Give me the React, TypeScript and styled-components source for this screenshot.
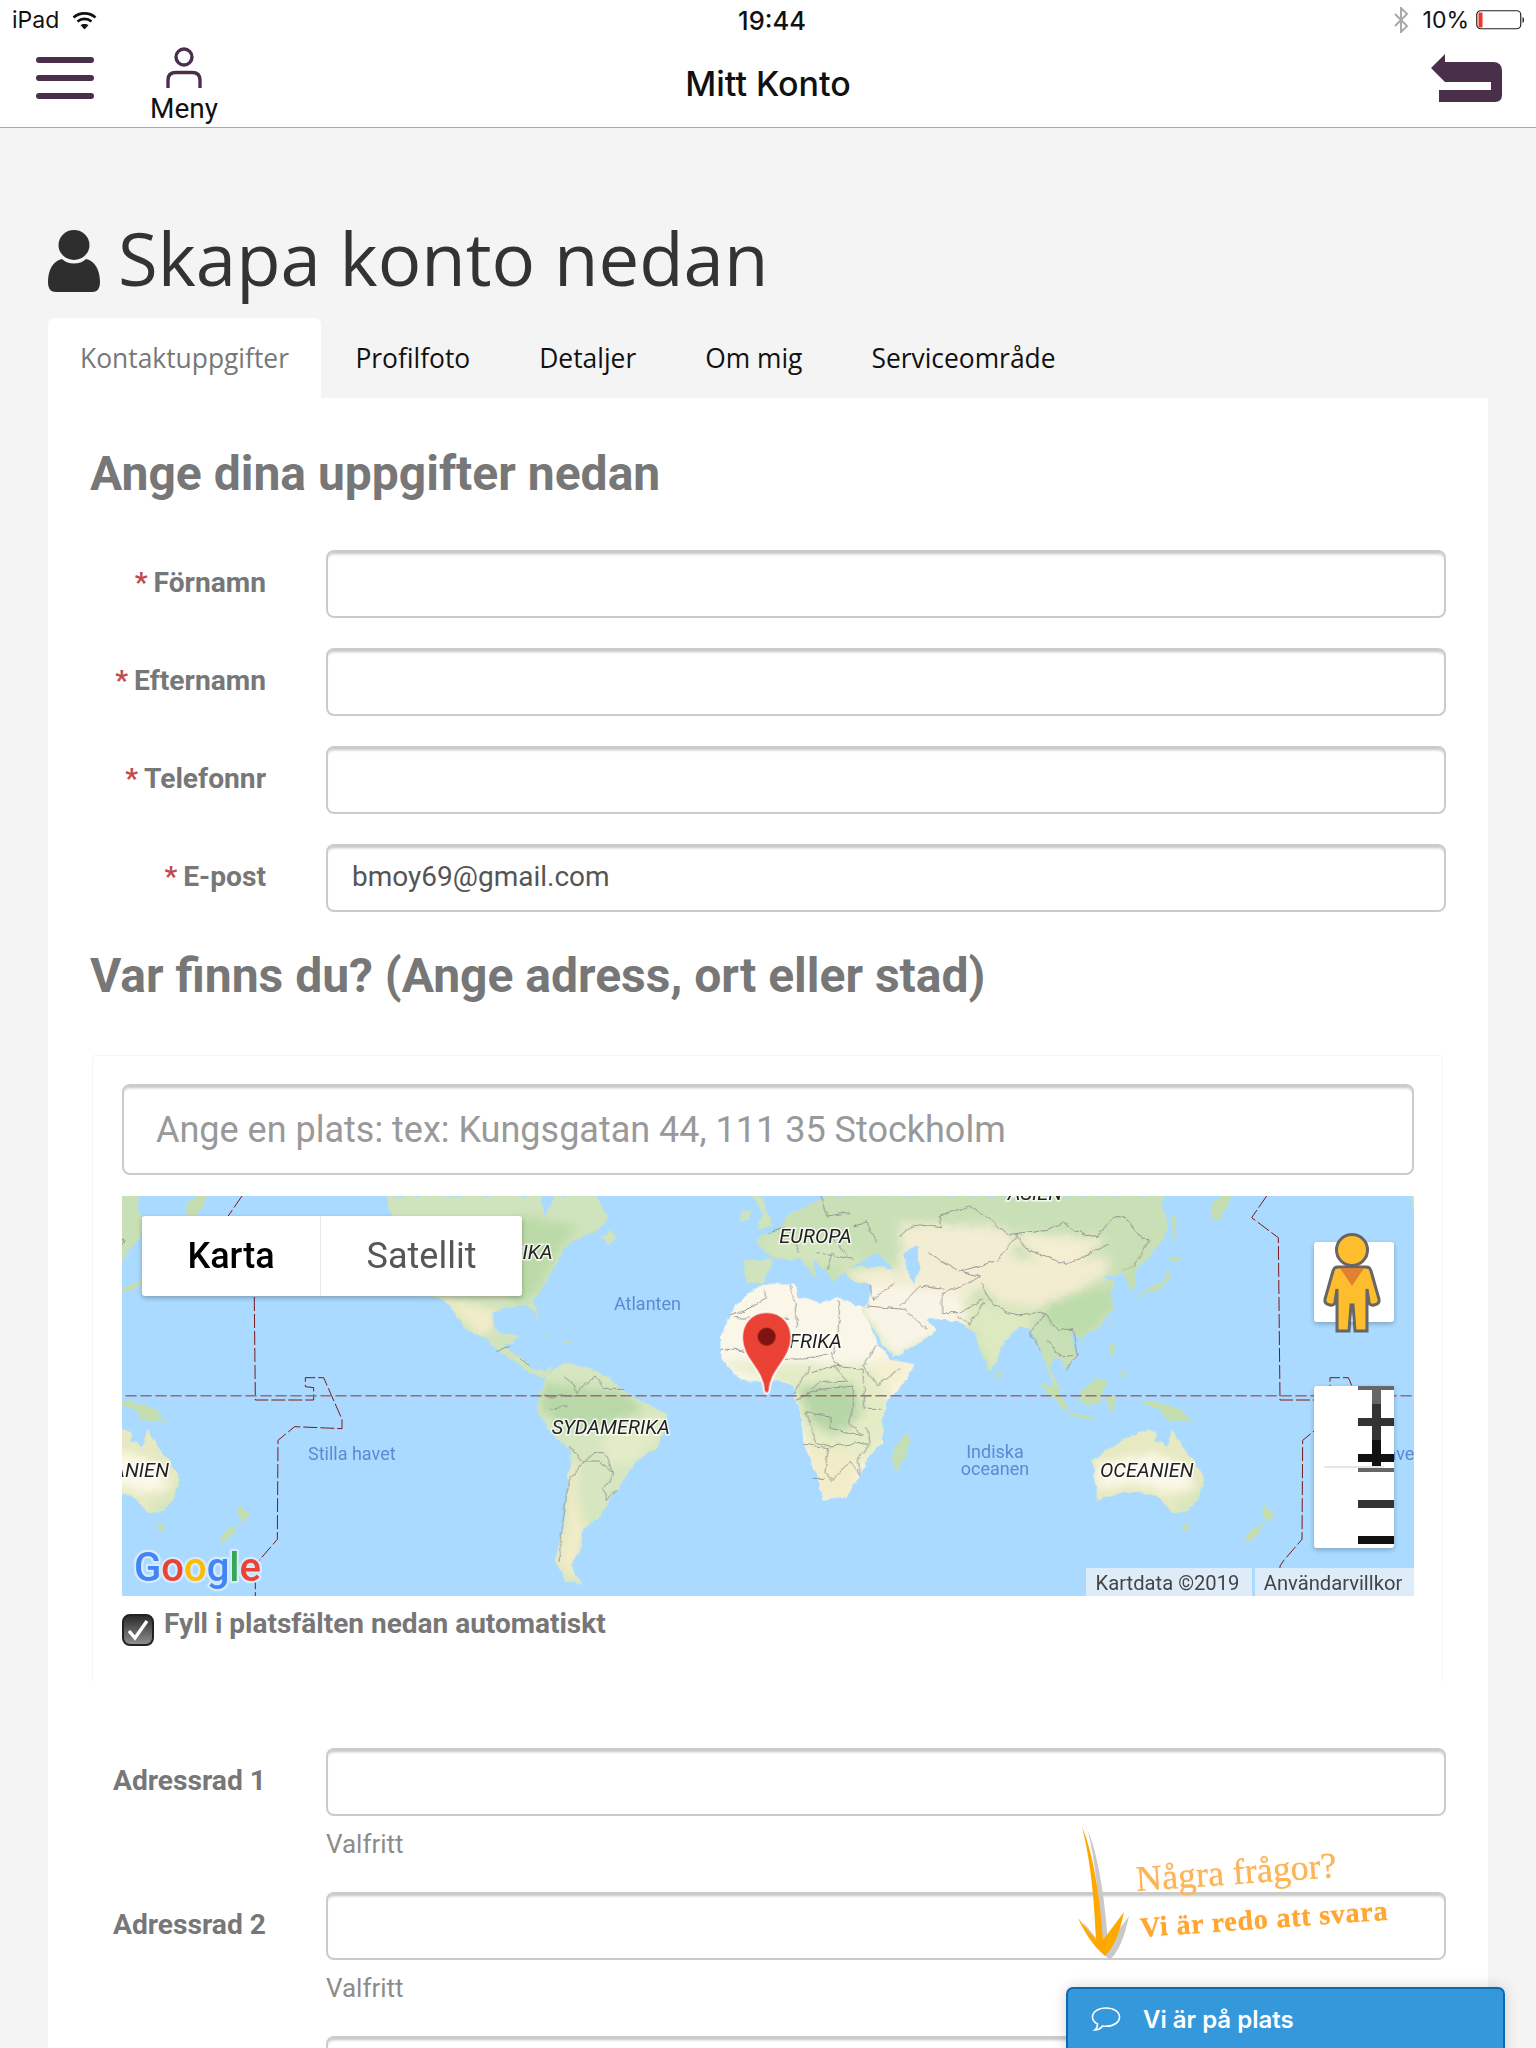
import { createGlobalStyle, styled } from "styled-components";

const GlobalStyle = createGlobalStyle`
	html, body {
		margin: 0;
		padding: 0;
		height: 2048px;
		overflow: hidden;
		background: #f4f4f4;
		font-family: Roboto, "Liberation Sans", sans-serif;
	}
	* { box-sizing: border-box; }
`;

const Page = styled.div`
	position: relative;
	width: 1536px;
	height: 2048px;
	overflow: hidden;
`;

const TopArea = styled.header`
	background: #fff;
	border-bottom: 1px solid #a9a9a9;
	height: 128px;
`;

const StatusBar = styled.div`
	display: grid;
	grid-template-columns: 1fr auto 1fr;
	align-items: center;
	height: 40px;
	padding: 0 10px 0 12px;
	font-family: Inter, sans-serif;
	font-size: 23px;
	color: #111;
`;

const StatusLeft = styled.div`
	display: flex;
	align-items: center;
	gap: 13px;
`;

const StatusRight = styled.div`
	display: flex;
	align-items: center;
	justify-content: flex-end;
	gap: 7px;
`;

const BluetoothIcon = styled.svg`
	margin-right: 7px;
`;

const Clock = styled.span`
	font-size: 25.5px;
	font-weight: 500;
	margin-left: 6px;
`;

const NavBar = styled.nav`
	display: grid;
	grid-template-columns: 1fr auto 1fr;
	align-items: center;
	height: 87px;
`;

const NavLeft = styled.div`
	align-self: start;
	display: flex;
	align-items: flex-start;
	gap: 56px;
	padding: 7px 0 0 36px;
`;

const Burger = styled.div`
	display: flex;
	flex-direction: column;
	gap: 12px;
	width: 58px;
	margin-top: 10px;

	span {
		display: block;
		height: 6px;
		border-radius: 3px;
		background: #4a2f4b;
	}
`;

const MenuButton = styled.div`
	display: flex;
	flex-direction: column;
	align-items: center;
	gap: 4px;
	font-size: 28px;
	line-height: 34px;
	color: #111;
`;

const NavTitle = styled.div`
	font-family: Inter, sans-serif;
	font-size: 34px;
	font-weight: 500;
	color: #111;
`;

const NavRight = styled.div`
	align-self: start;
	display: flex;
	justify-content: flex-end;
	padding: 14px 34px 0 0;
`;

const Main = styled.main`
	padding: 0 48px;
`;

const PageTitle = styled.h1`
	display: flex;
	align-items: center;
	gap: 18px;
	height: 190px;
	margin: 0;
	padding-top: 70px;
	font-family: "Open Sans", sans-serif;
	font-size: 72.5px;
	font-weight: 400;
	color: #333;

	svg {
		margin-top: 5px;
	}
`;

const Tabs = styled.div`
	display: flex;
	height: 80px;
`;

const Tab = styled.div<{ $active?: boolean }>`
	display: flex;
	align-items: center;
	padding: 0 ${(p) => (p.$active ? "32px" : "34.5px")};
	border-radius: 6px 6px 0 0;
	background: ${(p) => (p.$active ? "#fff" : "transparent")};
	color: ${(p) => (p.$active ? "#777" : "#111")};
	font-family: "Open Sans", sans-serif;
	font-size: 26.4px;
`;

const Panel = styled.section`
	background: #fff;
	padding: 46px 42px 0;
`;

const SectionTitle = styled.h2<{ $top?: number; $bottom?: number }>`
	height: 60px;
	margin: ${(p) => p.$top ?? 0}px 0 ${(p) => p.$bottom ?? 46}px;
	font-size: 48px;
	line-height: 60px;
	font-weight: 700;
	color: #777;
`;

const Rows = styled.div<{ $gap: number }>`
	display: flex;
	flex-direction: column;
	gap: ${(p) => p.$gap}px;
`;

const Row = styled.div`
	display: flex;
	gap: 60px;
`;

const Label = styled.label`
	width: 176px;
	height: 68px;
	flex: none;
	display: flex;
	align-items: center;
	justify-content: flex-end;
	gap: 6px;
	padding-bottom: 3px;
	font-size: 28.2px;
	font-weight: 700;
	color: #777;
	white-space: nowrap;
`;

const Required = styled.span`
	color: #c14b4b;
`;

const FieldColumn = styled.div`
	flex: 1;
	display: flex;
	flex-direction: column;
`;

const TextInput = styled.input<{ $large?: boolean }>`
	display: block;
	width: 100%;
	height: ${(p) => (p.$large ? "91px" : "68px")};
	padding: 0 ${(p) => (p.$large ? "32px" : "24px")} ${(p) => (p.$large ? "0" : "4px")};
	border: 2px solid #cbcbcb;
	border-radius: 8px;
	background: #fff;
	box-shadow: inset 0 4px 3px -2px rgba(0, 0, 0, 0.24);
	outline: none;
	font-family: Roboto, sans-serif;
	font-size: ${(p) => (p.$large ? "36px" : "28px")};
	font-weight: 400;
	color: #555;

	&::placeholder {
		color: #999;
		opacity: 1;
	}
`;

const HelpText = styled.div`
	height: 76px;
	padding-top: 10px;
	font-size: 26px;
	line-height: 36px;
	color: #8c8c8c;
`;

const LocationBox = styled.div`
	margin: 0 3px 65px 2px;
	padding: 28px 28px 36px 29px;
	border: 1px solid #f5f5f5;
	border-bottom-color: transparent;
	border-radius: 4px;
`;

const MapFrame = styled.div`
	position: relative;
	height: 400px;
	margin-top: 21px;
	overflow: hidden;
	background: #aadaff;

	> svg {
		display: block;
	}
`;

const MapToggle = styled.div`
	position: absolute;
	left: 20px;
	top: 20px;
	display: flex;
	width: 380px;
	height: 80px;
	border-radius: 3px;
	background: #fff;
	box-shadow: 0 2px 5px rgba(0, 0, 0, 0.28);
`;

const ToggleItem = styled.div<{ $active?: boolean }>`
	display: flex;
	align-items: center;
	justify-content: center;
	flex: ${(p) => (p.$active ? "0 0 179px" : "1")};
	font-size: 36px;
	font-weight: ${(p) => (p.$active ? 500 : 400)};
	color: ${(p) => (p.$active ? "#000" : "#565656")};
	border-right: ${(p) => (p.$active ? "1px solid #e6e6e6" : "none")};
`;

const MapControl = styled.div<{ $top: number; $height: number }>`
	position: absolute;
	left: 1192px;
	top: ${(p) => p.$top}px;
	width: 80px;
	height: ${(p) => p.$height}px;
	border-radius: 3px;
	background: #fff;
	box-shadow: 0 2px 5px rgba(0, 0, 0, 0.25);
`;

const Pegman = styled.svg`
	position: absolute;
	left: 10px;
	top: -9px;
	overflow: visible;
`;

const ZoomGlyph = styled.svg`
	position: absolute;
	left: 0;
	top: 0;
`;

const Attribution = styled.div`
	position: absolute;
	right: 0;
	bottom: 0;
	display: flex;
	gap: 3px;
`;

const AttributionItem = styled.span<{ $width: number }>`
	display: flex;
	align-items: center;
	justify-content: center;
	width: ${(p) => p.$width}px;
	height: 28px;
	padding: 1px 3px 0 0;
	background: #deecfa;
	font-size: 20.2px;
	color: #444;
`;

const PlaceName = styled.text`
	font-family: Roboto, sans-serif;
	font-size: 60px;
	font-style: italic;
	fill: #222;
	stroke: rgba(255, 255, 255, 0.75);
	stroke-width: 9px;
	paint-order: stroke;
`;

const OceanName = styled.text`
	font-family: Roboto, sans-serif;
	font-size: 54px;
	fill: #5a8bd2;
`;

const GoogleMark = styled.text`
	font-family: Roboto, sans-serif;
	font-size: 120px;
	font-weight: 500;
	stroke: #d5eaff;
	stroke-width: 14px;
	paint-order: stroke;
	stroke-linejoin: round;
`;

const CheckRow = styled.div`
	display: flex;
	gap: 10px;
	margin-top: 18px;
`;

const CheckBox = styled.div`
	display: flex;
	align-items: center;
	justify-content: center;
	width: 32px;
	height: 32px;
	border: 2px solid #222;
	border-radius: 8px;
	background: linear-gradient(#2c2c2c, #8e8e8e);
`;

const CheckLabel = styled.span`
	height: 22px;
	font-size: 28px;
	line-height: 20px;
	font-weight: 700;
	color: #777;
`;

const Hint = styled.div`
	position: absolute;
	left: 1076px;
	top: 1824px;
	width: 330px;
	height: 140px;
	pointer-events: none;
	font-family: "Liberation Serif", serif;
`;

const HintArrow = styled.svg`
	position: absolute;
	left: 0;
	top: 0;
`;

const HintLine = styled.div<{ $left: number; $top: number; $size: number; $bold?: boolean }>`
	position: absolute;
	left: ${(p) => p.$left}px;
	top: ${(p) => p.$top}px;
	font-size: ${(p) => p.$size}px;
	font-weight: ${(p) => (p.$bold ? 700 : 400)};
	letter-spacing: ${(p) => (p.$bold ? "0.8px" : "0")};
	color: ${(p) => (p.$bold ? "#ffa733" : "#fdb55a")};
	text-shadow: 0 0 1px ${(p) => (p.$bold ? "#ffa733" : "#fdb55a")};
	white-space: nowrap;
	transform: rotate(-4deg);
	transform-origin: left center;
`;

const ChatTab = styled.div`
	position: absolute;
	left: 1066px;
	top: 1987px;
	display: flex;
	align-items: center;
	gap: 22px;
	width: 439px;
	height: 70px;
	padding: 0 0 8px 23px;
	border-top: 2px solid #0b68b1;
	border-left: 2px solid #0b68b1;
	border-right: 2px solid #0b68b1;
	border-radius: 7px 7px 0 0;
	background: #3498db;
	box-shadow: 0 0 14px rgba(0, 0, 0, 0.16);
	font-family: Inter, sans-serif;
	font-size: 24px;
	font-weight: 600;
	color: #fff;
`;

const NORTH_AMERICA =
	"M-340,0 L120,0 L130,50 L125,75 L150,30 L160,0 L285,0 L325,65 L300,100 L260,115 L215,135 L185,170 L165,215 L130,270 L100,320 L120,375 L100,345 L75,325 L20,335 L-20,350 L-20,400 L20,415 L55,415 L45,440 L10,445 L40,470 L70,490 L100,520 L130,525 L160,505 L150,540 L120,545 L90,530 L60,510 L0,470 L-54,420 L-104,400 L-134,350 L-174,310 L-194,300 L-240,300 L-300,200 Z";
const SOUTH_AMERICA =
	"M190,500 L270,515 L330,545 L375,590 L440,625 L505,650 L490,720 L470,750 L400,810 L350,880 L330,915 L300,960 L250,1000 L240,1060 L210,1110 L245,1165 L200,1160 L165,1090 L190,1000 L205,850 L215,760 L160,720 L110,640 L120,590 L140,540 Z";
const AFRICA =
	"M660,420 L690,360 L730,300 L790,265 L880,262 L900,300 L960,320 L1010,305 L1090,335 L1130,440 L1170,490 L1240,505 L1220,550 L1160,620 L1145,680 L1150,740 L1100,790 L1080,840 L1040,900 L970,915 L950,840 L910,740 L905,660 L885,600 L880,565 L830,550 L770,555 L720,550 L665,490 Z";
const EURASIA =
	"M765,130 L840,95 L860,60 L900,40 L985,0 L1990,0 L1990,45 L2005,75 L1990,130 L1940,190 L1900,225 L1835,240 L1815,240 L1845,260 L1830,290 L1840,340 L1800,390 L1740,425 L1710,410 L1735,480 L1700,520 L1680,490 L1660,490 L1650,520 L1690,590 L1660,570 L1640,510 L1620,460 L1590,400 L1560,390 L1510,440 L1490,490 L1470,525 L1440,470 L1425,410 L1380,380 L1330,370 L1280,370 L1310,405 L1240,450 L1180,485 L1130,420 L1085,340 L1105,320 L1115,270 L1050,250 L1035,225 L1000,260 L980,225 L940,190 L950,250 L900,190 L830,190 L795,170 L770,130 Z";
const AUSTRALIA =
	"M575,795 L640,750 L680,725 L740,700 L770,710 L765,735 L805,750 L815,700 L850,760 L880,790 L912,850 L895,910 L850,955 L815,950 L770,900 L700,885 L620,905 L590,915 L590,870 Z";

const GREEN_ISLANDS = [
	"M420,560 L460,570 L510,640 L490,640 L440,590 Z",
	"M505,650 L580,665 L575,672 L510,660 Z",
	"M540,585 L590,550 L620,555 L600,620 L560,630 L540,610 Z",
	"M620,600 L650,595 L640,640 L625,645 Z",
	"M730,610 L790,620 L840,640 L885,688 L850,670 L800,675 L780,640 L730,625 Z",
	"M630,445 L645,445 L640,480 L628,470 Z",
	"M660,520 L680,525 L670,550 Z",
	"M632,385 L640,385 L636,405 Z",
	"M532,430 L550,428 L545,440 Z",
	"M288,518 L302,540 L288,548 Z",
	"M800,225 L815,225 L805,260 L770,285 L735,290 L720,315 L715,300 L750,275 L790,255 Z",
	"M810,180 L845,182 L815,200 Z",
	"M670,225 L700,210 L708,260 L690,285 L680,250 Z",
	"M815,55 L830,60 L825,145 L818,120 Z",
	"M935,20 L960,0 L995,0 L985,30 L945,85 L935,60 Z",
	"M1085,925 L1122,955 L1100,985 L1090,960 Z",
	"M1090,985 L1060,1030 L1030,1045 L1050,1005 Z",
	"M845,985 L870,985 L860,1010 Z",
];

const AFRICA_BORDERS =
	"M790,280 L800,305 L730,345 M870,265 L885,325 L890,395 M1018,315 V410 M700,365 L870,370 M665,460 L720,460 L780,490 L860,490 L925,488 L995,470 M1018,410 L995,480 L1020,520 M930,510 L900,560 L880,595 M935,530 L1000,510 L1040,555 L960,560 L935,580 M1000,510 L1090,520 L1090,560 M1130,445 L1090,510 L1130,570 L1200,520 M1090,570 V640 L1140,640 M890,610 L960,580 L1060,570 L1060,640 L1045,680 L1090,720 L1050,710 L990,700 L990,660 L915,650 M915,650 L950,740 L990,750 M910,745 L985,755 L975,830 L1000,855 M990,750 L1050,745 L1105,740 M1100,690 L1110,740 L1075,790 L1080,835 M940,850 H975 M1000,850 L1050,795 L1080,840 M690,360 L760,330";
const SOUTH_AMERICA_BORDERS =
	"M130,600 L230,600 M190,540 L225,570 L230,590 L285,540 L310,580 H370 M205,630 L150,640 M210,750 L250,800 L205,860 L185,1000 L180,1100 M250,800 L280,770 L310,770 L340,830 L310,880 L320,915 L350,880 M250,795 L300,795 L340,830 M-10,470 L30,450 M60,490 L90,510";
const EURASIA_BORDERS =
	"M810,110 L850,90 M870,110 L900,170 M950,170 L1060,190 M1060,90 L1100,80 L1130,140 M960,0 L980,60 L1050,50 M1000,130 L1040,180 M985,220 L1000,170 M1110,270 L1120,310 L1180,260 M1100,330 L1215,340 L1280,400 M1200,120 L1240,85 L1325,95 L1320,60 L1410,30 L1530,115 L1640,100 L1690,80 L1730,105 L1790,125 L1840,60 L1880,65 L1925,130 L1950,130 L1900,210 L1870,225 M1550,115 L1580,160 L1700,205 L1760,175 L1825,145 M1285,170 L1380,225 L1490,195 L1550,115 M1380,225 L1440,240 L1410,260 L1325,290 L1325,350 M1440,260 L1480,330 L1550,360 L1635,350 L1670,400 L1720,400 L1735,480 L1700,520 M1635,350 L1590,410 L1620,460 M1640,430 L1680,480 L1720,475 M1200,330 L1260,270 L1330,280 M1325,350 L1380,350 L1450,310 M1375,360 L1410,385 L1450,320";
const DATE_LINE =
	"M1100,0 L1055,65 L1135,125 L1140,612 L1315,612 L1315,575 L1290,572 L1290,545 L1345,545 L1400,670 L1400,698 L1258,692 L1208,733 L1206,1030 L1150,1095 L1140,1110 L1140,1200";

const WorldMap = () => (
	<svg width={1292} height={400} viewBox="0 0 3876 1200">
		<defs>
			<filter id="soft" x="-10%" y="-10%" width="120%" height="120%">
				<feGaussianBlur stdDeviation="14" />
			</filter>
			<filter id="rough" filterUnits="userSpaceOnUse" x={-420} y={-40} width={3000} height={1280} colorInterpolationFilters="sRGB">
				<feTurbulence type="fractalNoise" baseFrequency="0.035" numOctaves={3} seed={4} result="noise" />
				<feDisplacementMap in="SourceGraphic" in2="noise" scale={16} xChannelSelector="R" yChannelSelector="G" />
			</filter>
			<clipPath id="clipEurasia"><path d={EURASIA} /></clipPath>
			<clipPath id="clipAfrica"><path d={AFRICA} /></clipPath>
			<clipPath id="clipSouth"><path d={SOUTH_AMERICA} /></clipPath>
			<clipPath id="clipNorth"><path d={NORTH_AMERICA} /></clipPath>
			<clipPath id="clipAustralia"><path d={AUSTRALIA} /></clipPath>
			<g id="land" filter="url(#rough)">
				<path d={NORTH_AMERICA} fill="#cfe3bc" />
				<g clipPath="url(#clipNorth)">
					<g filter="url(#soft)">
						<path d="M-194,300 L-60,330 L0,345 L-20,400 L-60,420 L-134,350 Z" fill="#f1ecc8" />
						<path d="M60,60 L230,90 L170,170 L110,290 L60,320 L0,250 Z" fill="#bcdaa8" />
					</g>
				</g>
				<path d={SOUTH_AMERICA} fill="#d5e6c0" />
				<g clipPath="url(#clipSouth)">
					<g filter="url(#soft)">
						<path d="M130,560 L370,590 L430,640 L330,680 L200,700 L120,640 Z" fill="#b9d8a8" />
						<path d="M380,680 L490,650 L480,730 L400,810 L320,810 L300,720 Z" fill="#e2ecc6" />
						<path d="M215,800 L240,800 L230,900 L260,990 L230,1165 L170,1100 L195,1000 Z" fill="#f1ecc7" />
					</g>
				</g>
				<path d={AFRICA} fill="#faf7e9" />
				<g clipPath="url(#clipAfrica)">
					<g filter="url(#soft)">
						<path d="M650,500 L1090,505 L1160,530 L1180,700 L1100,800 L920,750 L860,570 Z" fill="#e4ecc6" />
						<path d="M890,570 L1060,560 L1090,650 L1010,720 L930,680 Z" fill="#b7d6a7" />
						<path d="M1130,480 L1250,500 L1180,590 L1130,560 Z" fill="#f5efd2" />
						<path d="M910,745 L1080,770 L1060,910 L960,920 Z" fill="#f2ecc8" />
					</g>
				</g>
				<path d={EURASIA} fill="#c9e0b6" />
				<g clipPath="url(#clipEurasia)">
					<g filter="url(#soft)">
						<path d="M1035,225 L1190,210 L1200,270 L1110,270 L1050,250 Z" fill="#f4eed3" />
						<path d="M1085,270 L1400,270 L1440,370 L1300,420 L1180,490 L1085,350 Z" fill="#f9f5e6" />
						<path d="M1200,80 L1500,90 L1560,130 L1480,260 L1400,300 L1200,270 Z" fill="#f2edd3" />
						<path d="M1570,110 L1820,130 L1760,180 L1700,210 L1620,200 L1550,130 Z" fill="#f4eed2" />
						<path d="M1440,240 L1530,180 L1680,200 L1830,180 L1820,240 L1700,300 L1620,340 L1500,320 L1440,270 Z" fill="#f2ecd0" />
						<path d="M1380,300 L1600,350 L1590,420 L1480,530 L1420,420 Z" fill="#dde9c0" />
						<path d="M1640,320 L1850,270 L1840,340 L1740,420 L1640,380 Z" fill="#bcdcaa" />
						<path d="M765,130 L1000,130 L1100,200 L960,210 L830,190 Z" fill="#d2e5bd" />
					</g>
				</g>
				<path d="M1060,210 L1130,170 L1180,215 L1050,212 Z" fill="#aadaff" />
				<path d="M1210,170 L1250,150 L1260,220 L1240,265 L1225,230 Z" fill="#aadaff" />
				<path d="M755,0 L785,0 L815,90 L770,100 L790,50 Z M720,75 L725,45 L755,40 L745,75 Z M305,125 L330,100 L350,125 L325,145 Z M730,190 L820,190 L790,260 L740,260 Z" fill="#cfe3bc" />
				<path d="M100,400 L160,420 L130,412 Z M185,430 L220,440 L190,440 Z M1225,710 L1230,740 L1195,825 L1178,810 L1180,755 Z" fill="#c6dfb2" />
				<path d={AFRICA_BORDERS} fill="none" stroke="#8c8c8c" strokeWidth={2.6} />
				<path d={SOUTH_AMERICA_BORDERS} fill="none" stroke="#8c8c8c" strokeWidth={2.6} />
				<path d={EURASIA_BORDERS} fill="none" stroke="#8c8c8c" strokeWidth={2.6} />
				<g transform="translate(1200 0)">
					{GREEN_ISLANDS.map((d) => (
						<path key={d} d={d} fill="#c4deb0" />
					))}
					<path d={AUSTRALIA} fill="#e6e9c2" />
					<g clipPath="url(#clipAustralia)">
						<g filter="url(#soft)">
							<path d="M590,800 L760,770 L860,810 L880,880 L800,890 L700,860 L590,880 Z" fill="#fbf8e8" />
							<path d="M800,950 L880,900 L912,850 L930,960 Z" fill="#d4e6bd" />
						</g>
					</g>
				</g>
			</g>
			<g id="world">
				<use href="#land" />
				<g transform="translate(1200 0)">
					<OceanName x={1298} y={792}>Stilla havet</OceanName>
					<OceanName x={285} y={785} textAnchor="middle">Indiska</OceanName>
					<OceanName x={285} y={838} textAnchor="middle">oceanen</OceanName>
					<PlaceName x={600} y={842}>OCEANIEN</PlaceName>
					<PlaceName x={405} y={13} textAnchor="middle">ASIEN</PlaceName>
					<path d={DATE_LINE} fill="none" stroke="#7c1818" strokeWidth={3} strokeDasharray="42 9" />
				</g>
				<OceanName x={342} y={342}>Atlanten</OceanName>
				<PlaceName x={838} y={140}>EUROPA</PlaceName>
				<PlaceName x={1026} y={455} textAnchor="end">AFRIKA</PlaceName>
				<PlaceName x={155} y={715}>SYDAMERIKA</PlaceName>
				<PlaceName x={158} y={190} textAnchor="end">NORDAMERIKA</PlaceName>
			</g>
		</defs>
		<use href="#world" x={1134 - 3074} />
		<use href="#world" x={1134} />
		<use href="#world" x={1134 + 3074} />
		<line x1={10} x2={3876} y1={600} y2={600} stroke="#9c6b76" strokeWidth={4} strokeDasharray="34 11" />
		<g transform="translate(1134 0)">
			<path
				d="M800,348 C748,348 726,390 726,425 C726,490 790,520 792,585 Q800,600 808,585 C810,520 874,490 874,425 C874,390 852,348 800,348 Z"
				fill="#ea4335"
				stroke="#fff"
				strokeWidth={5}
			/>
			<circle cx={800} cy={422} r={27} fill="#7e1310" />
		</g>
		<GoogleMark x={36} y={1154}>
			<tspan fill="#4285f4">G</tspan>
			<tspan fill="#ea4335">o</tspan>
			<tspan fill="#fbbc05">o</tspan>
			<tspan fill="#4285f4">g</tspan>
			<tspan fill="#34a853">l</tspan>
			<tspan fill="#ea4335">e</tspan>
		</GoogleMark>
	</svg>
);

const FormRow = ({ label, required, value }: { label: string; required?: boolean; value?: string }) => (
	<Row>
		<Label>
			{required && <Required>*</Required>}
			{label}
		</Label>
		<FieldColumn>
			<TextInput defaultValue={value} readOnly />
		</FieldColumn>
	</Row>
);

const OptionalRow = ({ label }: { label: string }) => (
	<Row>
		<Label>{label}</Label>
		<FieldColumn>
			<TextInput readOnly />
			<HelpText>Valfritt</HelpText>
		</FieldColumn>
	</Row>
);

const App = () => (
	<Page>
		<GlobalStyle />
		<TopArea>
			<StatusBar>
				<StatusLeft>
					<span>iPad</span>
					<svg width={25} height={19} viewBox="0 0 25 19" fill="none" stroke="#111" strokeWidth={2.6}>
						<path d="M1.5 6.5 C7.5 1 17.5 1 23.5 6.5" />
						<path d="M5.5 10.5 C9.5 7 15.5 7 19.5 10.5" />
						<path d="M12.5 18.5 L8.5 14 C10.5 12.5 14.5 12.5 16.5 14 Z" fill="#111" stroke="none" />
					</svg>
				</StatusLeft>
				<Clock>19:44</Clock>
				<StatusRight>
					<BluetoothIcon width={16} height={26} viewBox="0 0 16 26" fill="none" stroke="#a9a9a9" strokeWidth={2}>
						<path d="M2 7 L14 19 L8 25 V1 L14 7 L2 19" />
					</BluetoothIcon>
					<span>10%</span>
					<svg width={50} height={20} viewBox="0 0 50 20">
						<rect x={0.75} y={0.75} width={44} height={18} rx={4} fill="none" stroke="#222" strokeWidth={1.2} />
						<rect x={2.5} y={2.5} width={4} height={15} rx={1} fill="#f0352b" />
						<path d="M46.5 7 C48.5 7.5 48.5 12.5 46.5 13 Z" fill="#222" />
					</svg>
				</StatusRight>
			</StatusBar>
			<NavBar>
				<NavLeft>
					<Burger>
						<span />
						<span />
						<span />
					</Burger>
					<MenuButton>
						<svg width={36} height={41} viewBox="0 0 36 41" fill="none" stroke="#4a2f4b" strokeWidth={3.4}>
							<circle cx={18} cy={10} r={8} />
							<path d="M2 40 V33 C2 27 6 25.5 10 25.5 H26 C30 25.5 34 27 34 33 V40" strokeLinecap="round" />
						</svg>
						<span>Meny</span>
					</MenuButton>
				</NavLeft>
				<NavTitle>Mitt Konto</NavTitle>
				<NavRight>
					<svg width={71} height={48} viewBox="0 0 71 48">
						<path d="M14 0 V8 H62 Q71 8 71 17 V41 Q71 48 64 48 H8 V36 H60 V28 H14 L0 14 Z" fill="#4a2f4b" />
					</svg>
				</NavRight>
			</NavBar>
		</TopArea>
		<Main>
			<PageTitle>
				<svg width={52} height={62} viewBox="0 0 52 62">
					<ellipse cx={26} cy={15} rx={15.5} ry={15} fill="#2e2e2e" />
					<path d="M14 29 C20 35 32 35 38 29 C47 31 52 40 52 52 C52 59 49 62 44 62 H8 C3 62 0 59 0 52 C0 40 5 31 14 29 Z" fill="#2e2e2e" />
				</svg>
				Skapa konto nedan
			</PageTitle>
			<Tabs>
				<Tab $active>Kontaktuppgifter</Tab>
				<Tab>Profilfoto</Tab>
				<Tab>Detaljer</Tab>
				<Tab>Om mig</Tab>
				<Tab>Serviceområde</Tab>
			</Tabs>
			<Panel>
				<SectionTitle>Ange dina uppgifter nedan</SectionTitle>
				<Rows $gap={30}>
					<FormRow label="Förnamn" required />
					<FormRow label="Efternamn" required />
					<FormRow label="Telefonnr" required />
					<FormRow label="E-post" required value="bmoy69@gmail.com" />
				</Rows>
				<SectionTitle $top={34} $bottom={49}>Var finns du? (Ange adress, ort eller stad)</SectionTitle>
				<LocationBox>
					<TextInput $large readOnly placeholder="Ange en plats: tex: Kungsgatan 44, 111 35 Stockholm" />
					<MapFrame>
						<WorldMap />
						<MapToggle>
							<ToggleItem $active>Karta</ToggleItem>
							<ToggleItem>Satellit</ToggleItem>
						</MapToggle>
						<MapControl $top={46} $height={80}>
							<Pegman width={56} height={99} viewBox="0 0 56 99">
								<circle cx={28} cy={17} r={15.5} fill="#fdbd2c" stroke="#666" strokeWidth={3} />
								<path
									d="M14 34 H42 Q46 34 47 38 L55 66 Q56 71 50 72 Q46 73 45 69 L43 56 V98 H31 L29 72 H27 L25 98 H13 V56 L11 69 Q10 73 6 72 Q0 71 1 66 L9 38 Q10 34 14 34 Z"
									fill="#fdbd2c"
									stroke="#666"
									strokeWidth={3}
								/>
								<path d="M16 35 H40 L28 53 Z" fill="#e08030" />
							</Pegman>
						</MapControl>
						<MapControl $top={190} $height={162}>
							<ZoomGlyph width={80} height={162} viewBox="0 0 80 162">
								<rect x={10} y={80} width={60} height={2} fill="#e6e6e6" />
								<rect x={44} y={0} width={36} height={4} fill="#666" />
								<rect x={58} y={4} width={9} height={14} fill="#666" />
								<rect x={58} y={18} width={9} height={36} fill="#333" />
								<rect x={58} y={54} width={9} height={26} fill="#111" />
								<rect x={44} y={32} width={36} height={8} fill="#333" />
								<rect x={44} y={68} width={36} height={8} fill="#111" />
								<rect x={44} y={82} width={36} height={4} fill="#666" />
								<rect x={44} y={114} width={36} height={8} fill="#333" />
								<rect x={44} y={150} width={36} height={8} fill="#111" />
							</ZoomGlyph>
						</MapControl>
						<Attribution>
							<AttributionItem $width={166}>Kartdata ©2019</AttributionItem>
							<AttributionItem $width={159}>Användarvillkor</AttributionItem>
						</Attribution>
					</MapFrame>
					<CheckRow>
						<CheckBox>
							<svg width={24} height={24} viewBox="0 0 24 24" fill="none" stroke="#fff" strokeWidth={3.4}>
								<path d="M3 13 L9 20 L21 3" />
							</svg>
						</CheckBox>
						<CheckLabel>Fyll i platsfälten nedan automatiskt</CheckLabel>
					</CheckRow>
				</LocationBox>
				<Rows $gap={0}>
					<OptionalRow label="Adressrad 1" />
					<OptionalRow label="Adressrad 2" />
					<Row>
						<Label />
						<FieldColumn>
							<TextInput readOnly />
						</FieldColumn>
					</Row>
				</Rows>
			</Panel>
		</Main>
		<Hint>
			<HintArrow width={60} height={140} viewBox="0 0 60 140">
				<path d="M9 5 C18 25 26 70 29 118 L50 90 C46 110 40 125 31 134 C20 125 10 110 4 96 L22 118 C20 70 16 35 9 5 Z" fill="#c9c9c9" transform="translate(3 2)" />
				<path d="M6 3 C16 25 24 70 27 116 L48 88 C44 108 38 123 29 132 C18 123 8 108 2 94 L20 116 C18 70 14 35 6 3 Z" fill="#ffa800" />
			</HintArrow>
			<HintLine $left={60} $top={34} $size={36}>Några frågor?</HintLine>
			<HintLine $left={64} $top={88} $size={28} $bold>Vi är redo att svara</HintLine>
		</Hint>
		<ChatTab>
			<svg width={30} height={26} viewBox="0 0 30 26" fill="none" stroke="#fff" strokeWidth={1.6}>
				<path d="M15 2 C7 2 1.5 6 1.5 11 C1.5 14 3.5 16.5 6.5 18 C6.5 20.5 5.5 23 4 24 C7.5 24 10 22 11.5 20 C12.5 20.2 14 20.3 15 20.3 C23 20.3 28.5 16 28.5 11 C28.5 6 23 2 15 2 Z" />
			</svg>
			Vi är på plats
		</ChatTab>
	</Page>
);

export default App;
